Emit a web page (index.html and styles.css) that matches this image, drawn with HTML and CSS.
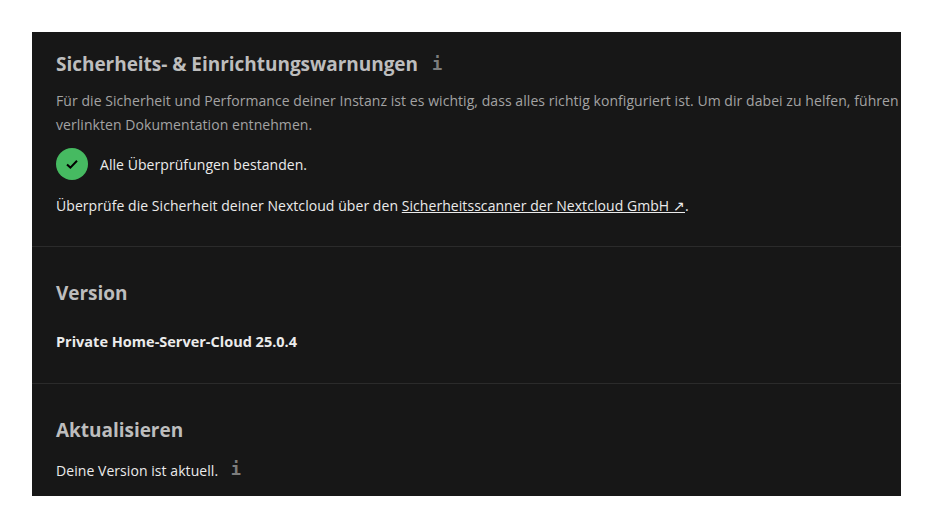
FILE: index.html
```html
<!DOCTYPE html>
<html lang="de">
<head>
<meta charset="utf-8">
<title>Übersicht</title>
<link rel="stylesheet" href="styles.css">
</head>
<body>
<main class="panel">
  <section class="section first">
    <h2 class="title">Sicherheits- &amp; Einrichtungswarnungen <span class="info info-title">i</span></h2>
    <p class="desc">Für die Sicherheit und Performance deiner Instanz ist es wichtig, dass alles richtig konfiguriert ist. Um dir dabei zu helfen, führen<br>verlinkten Dokumentation entnehmen.</p>
    <div class="status">
      <span class="check"><svg width="16" height="16" viewBox="0 0 16 16"><path d="M3 8.4 6.4 11.6 13 4.8" fill="none" stroke="#000" stroke-width="2"/></svg></span>
      <span>Alle Überprüfungen bestanden.</span>
    </div>
    <p class="scan">Überprüfe die Sicherheit deiner Nextcloud über den <a href="#">Sicherheitsscanner der Nextcloud GmbH ↗</a>.</p>
  </section>
  <section class="section version">
    <h2 class="title">Version</h2>
    <p class="strong">Private Home-Server-Cloud 25.0.4</p>
  </section>
  <section class="section update">
    <h2 class="title">Aktualisieren</h2>
    <p class="current">Deine Version ist aktuell. <span class="info info-inline">i</span></p>
  </section>
</main>
</body>
</html>
```
FILE: styles.css
```css
html, body { margin: 0; height: 100%; background: #fff; }
body { padding: 32px; box-sizing: border-box; height: 528px; overflow: hidden; }
.panel {
  width: 869px; height: 464px; overflow: hidden; background: #171717; color: #ebebeb;
  font-family: "Open Sans", "Noto Sans", sans-serif; font-size: 14px; letter-spacing: 0.06px;
}
.section { padding: 17px 24px 0; border-bottom: 1px solid #2b2b2b; white-space: nowrap; box-sizing: border-box; }
.first { height: 215px; }
.version { height: 137px; padding-top: 31px; }
.update { padding-top: 31px; border-bottom: 0; }
.section p { margin: 0; }
.title { margin: 0; font-size: 19px; line-height: 30px; font-weight: 700; color: #bdbdbd; letter-spacing: -0.03px; }
.info { font-family: "DejaVu Sans Mono", monospace; font-weight: 700; color: #7d7d7d; letter-spacing: 0; }
.info-title { font-size: 17px; margin-left: 9px; vertical-align: 1px; }
.info-inline { font-size: 17px; margin-left: 9px; vertical-align: 1px; }
.desc { color: #a3a3a3; line-height: 24px; margin-top: 10px !important; }
.status { display: flex; align-items: center; gap: 12px; margin-top: 11px; height: 32px; }
.check { width: 32px; height: 32px; border-radius: 50%; background: #46ba61; display: flex; align-items: center; justify-content: center; }
.scan { margin-top: 14px !important; line-height: 24px; }
.scan a { color: inherit; }
.strong { margin-top: 22px !important; font-size: 14.5px; font-weight: 700; line-height: 24px; letter-spacing: 0; }
.current { margin-top: 12px !important; line-height: 24px; }
```
